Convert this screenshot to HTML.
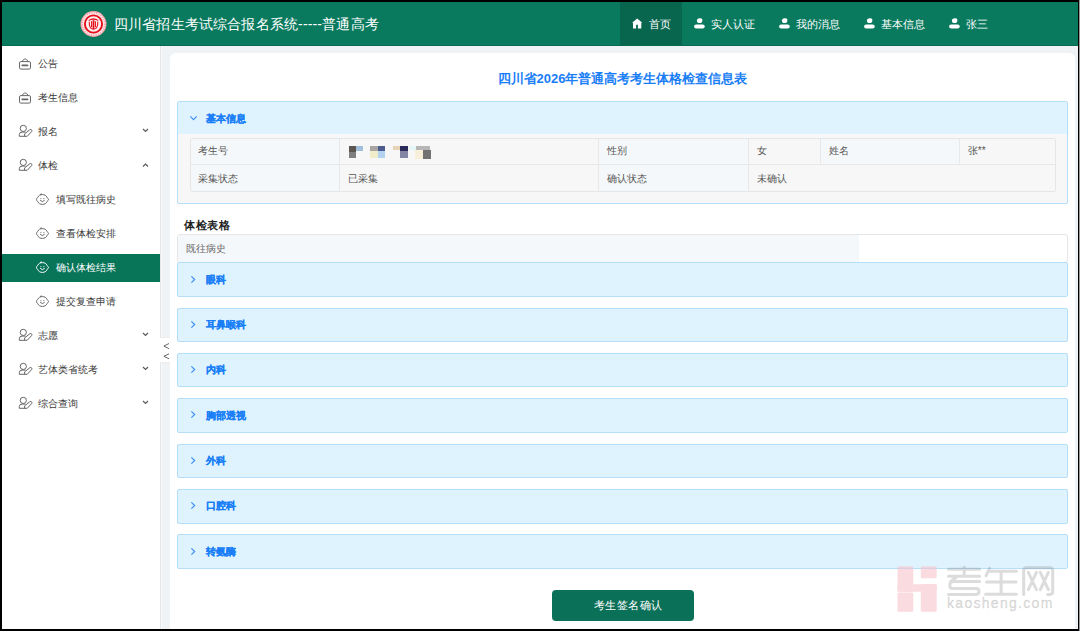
<!DOCTYPE html>
<html><head><meta charset="utf-8"><style>
*{box-sizing:border-box;margin:0;padding:0}
html,body{width:1080px;height:631px;overflow:hidden;background:#000;font-family:"Liberation Sans",sans-serif}
#frame{position:absolute;left:2px;top:2px;width:1076px;height:627px;overflow:hidden;background:#f0f3f6}
#edge{position:absolute;left:1079px;top:0;width:1px;height:631px;background:#9a9a9a}
.abs{position:absolute}
#hdr{position:absolute;left:0;top:0;width:1076px;height:44px;background:#097a5e;box-shadow:inset 0 -1px 0 #076a52}
#hdr .title{position:absolute;left:112px;top:11.9px;font-size:14px;letter-spacing:0.16px;color:#fff;white-space:nowrap;line-height:20px}
#nav .it{position:absolute;top:0.6px;height:43px;color:#fff;font-size:11.2px;line-height:43px;white-space:nowrap}
#nav .act{top:0}
#nav .act{background:#08664f}
#side{position:absolute;left:0;top:44px;width:159px;height:583px;background:#fff;border-right:1px solid #e4e4e6;box-shadow:1px 0 0 #fbfbfc}
.si{position:absolute;left:0;width:158px;height:28px;font-size:10px;color:#3a3a3a;line-height:28px;white-space:nowrap}
.si .tx{position:absolute;left:36px;top:0px}
.si.sub .tx{left:54px}
.si.on{background:#087559;color:#fff}
#card{position:absolute;left:168px;top:51px;width:905px;height:600px;background:#fff;border-radius:6px}
.ptitle{position:absolute;left:0;width:905px;top:16.5px;text-align:center;font-size:13px;font-weight:bold;color:#1a7ef6;line-height:18px}
.pan{position:absolute;left:7px;width:891px;border:1px solid #b5def8;border-radius:2px;background:#def3fd;overflow:hidden}
.pan .ph{position:absolute;left:0;top:0;width:100%}
.pan .ch{position:absolute;left:12px}
.pan .pt{position:absolute;left:28px;top:0.4px;line-height:32px;font-size:10px;font-weight:bold;color:#1a7ef7;-webkit-text-stroke:0.2px #1a7ef7}
#collapse{position:absolute;left:158px;top:335.4px;width:12.4px;height:26px;background:#fff;border:1px solid #eeeeee;border-left:none;border-radius:0 3px 3px 0}
table.info{position:absolute;left:12px;top:36px;width:867px;border-collapse:collapse;font-size:10px;color:#333}
table.info td{height:27px;border:1px solid #e3e4e6;background:#f8f9fa;padding:0 0 0 8px;white-space:nowrap}
.blur i{display:inline-block;width:12px;height:10px;margin-right:12px;vertical-align:middle}
.sect{position:absolute;left:14px;top:163.7px;font-size:11px;letter-spacing:0.55px;font-weight:bold;color:#222;line-height:16px}
.jw{position:absolute;left:7px;top:181px;width:891px;height:29px;border:1px solid #e6e6e6;border-radius:3px;background:#fff;overflow:hidden}
.jwl{position:absolute;left:0;top:0;width:681px;height:28px;background:#f5f8fa;font-size:10px;color:#666;line-height:28px;padding-left:8px}
.btn{position:absolute;left:381.5px;top:536.5px;width:142px;height:31px;background:#0a7057;border-radius:4px;color:#fff;font-size:11px;letter-spacing:0.5px;text-align:left;padding-left:42px;line-height:31px;padding-top:0.5px}
#wm{position:absolute;left:895px;top:564px;width:170px;height:50px}
#wm .wt{position:absolute;left:50px;top:-3px;font-size:32px;color:rgba(150,150,150,0.3);font-weight:bold;letter-spacing:6px;line-height:36px}
#wm .wu{position:absolute;left:50px;top:30px;font-size:14px;color:rgba(150,150,150,0.3);-webkit-text-stroke:0.45px rgba(150,150,150,0.3);letter-spacing:1.3px;line-height:14px}

.tbl{position:absolute;border:1px solid #e6e6e6;border-radius:2px;overflow:hidden;background:#f7f7f7}
.tbl .td{position:absolute;font-size:10px;color:#555;line-height:26px;padding-left:8.5px;white-space:nowrap}
.tbl .vl{position:absolute;width:1px;background:#e8e8e8}
.tbl .hl{position:absolute;height:1px;background:#e8e8e8}
.px{position:absolute;left:9.5px;top:8.4px;width:90px;height:14px}
.px b{position:absolute;display:block}
</style></head><body>
<div id="frame">
<div id="hdr"><svg style="position:absolute;left:78px;top:9px" width="27" height="27" viewBox="0 0 27 27"><circle cx="13.5" cy="13" r="12.9" fill="#fbe3e5"/>
<circle cx="13.5" cy="13" r="12.6" fill="none" stroke="#e53840" stroke-width="0.6" opacity="0.7"/>
<circle cx="13.5" cy="13" r="11.2" fill="none" stroke="#ea4a52" stroke-width="1.3" stroke-dasharray="0.8 1.6" opacity="0.55"/>
<circle cx="13.5" cy="13" r="8.6" fill="#fdf1f2" stroke="#e60f1c" stroke-width="1.9"/>
<path d="M8.6 8.9 Q13.5 5.6 18.4 8.9 L18.2 9.9 Q13.5 7.6 8.8 9.9Z" fill="#e60f1c"/>
<path d="M9.3 10.6 Q8.8 14.5 10.6 17.2 M17.7 10.6 Q18.2 14.5 16.4 17.2 M11.6 10.2 V16.2 M15.4 10.2 V16.2" fill="none" stroke="#e60f1c" stroke-width="1.1"/>
<path d="M13.5 9.2 V18.6" stroke="#e60f1c" stroke-width="1.7"/>
<path d="M10.6 17.4 Q13.5 18.8 16.4 17.4" fill="none" stroke="#e60f1c" stroke-width="0.9"/></svg><div class="title">四川省招生考试综合报名系统-----普通高考</div><div id="nav"><div class="it act" style="left:618px;width:62px"></div><svg style="position:absolute;left:630px;top:16.3px" width="11" height="11" viewBox="0 0 11 11"><path d="M5.2 0.4 L10.3 4.7 L9.3 4.7 V10.6 H5.9 V6.8 H4.1 V10.6 H1 V4.7 H0.1 Z" fill="#fff"/></svg><div class="it" style="left:647px">首页</div><svg style="position:absolute;left:692px;top:16.1px" width="11" height="11" viewBox="0 0 11 11"><path d="M2.9 2.8 Q2.9 0.2 5.7 0.2 Q8.3 0.2 8.3 1.6 V2.8 Q8.3 5.1 5.6 5.1 Q2.9 5.1 2.9 2.8Z" fill="#fff"/><rect x="0.1" y="6.4" width="10.6" height="4.2" rx="2" fill="#fff"/></svg><div class="it" style="left:709px">实人认证</div><svg style="position:absolute;left:777px;top:16.1px" width="11" height="11" viewBox="0 0 11 11"><path d="M2.9 2.8 Q2.9 0.2 5.7 0.2 Q8.3 0.2 8.3 1.6 V2.8 Q8.3 5.1 5.6 5.1 Q2.9 5.1 2.9 2.8Z" fill="#fff"/><rect x="0.1" y="6.4" width="10.6" height="4.2" rx="2" fill="#fff"/></svg><div class="it" style="left:794px">我的消息</div><svg style="position:absolute;left:862px;top:16.1px" width="11" height="11" viewBox="0 0 11 11"><path d="M2.9 2.8 Q2.9 0.2 5.7 0.2 Q8.3 0.2 8.3 1.6 V2.8 Q8.3 5.1 5.6 5.1 Q2.9 5.1 2.9 2.8Z" fill="#fff"/><rect x="0.1" y="6.4" width="10.6" height="4.2" rx="2" fill="#fff"/></svg><div class="it" style="left:879px">基本信息</div><svg style="position:absolute;left:947px;top:16.1px" width="11" height="11" viewBox="0 0 11 11"><path d="M2.9 2.8 Q2.9 0.2 5.7 0.2 Q8.3 0.2 8.3 1.6 V2.8 Q8.3 5.1 5.6 5.1 Q2.9 5.1 2.9 2.8Z" fill="#fff"/><rect x="0.1" y="6.4" width="10.6" height="4.2" rx="2" fill="#fff"/></svg><div class="it" style="left:964px">张三</div></div></div>
<div id="side">
<div class="si" style="top:3.5px"><svg style="position:absolute;left:13.5px;top:5.5px" width="20" height="18" viewBox="0 0 20 18"><rect x="3.5" y="6.6" width="11" height="7.5" rx="1.3" fill="none" stroke="#666" stroke-width="1"/><path d="M6.2 6.6 L7.4 4.7 Q7.7 4.1 8.4 4.1 H9.8 Q10.5 4.1 10.8 4.7 L12 6.6" fill="none" stroke="#666" stroke-width="1"/><path d="M6.2 10.4 H11.6" stroke="#666" stroke-width="1.6" stroke-linecap="round"/></svg><span class="tx">公告</span></div>
<div class="si" style="top:37.5px"><svg style="position:absolute;left:13.5px;top:5.5px" width="20" height="18" viewBox="0 0 20 18"><rect x="3.5" y="6.6" width="11" height="7.5" rx="1.3" fill="none" stroke="#666" stroke-width="1"/><path d="M6.2 6.6 L7.4 4.7 Q7.7 4.1 8.4 4.1 H9.8 Q10.5 4.1 10.8 4.7 L12 6.6" fill="none" stroke="#666" stroke-width="1"/><path d="M6.2 10.4 H11.6" stroke="#666" stroke-width="1.6" stroke-linecap="round"/></svg><span class="tx">考生信息</span></div>
<div class="si" style="top:71.5px"><svg style="position:absolute;left:14px;top:4.799999999999997px" width="20" height="18" viewBox="0 0 20 18"><circle cx="7.3" cy="6.4" r="3.1" fill="none" stroke="#666" stroke-width="1"/><path d="M3.3 14.3 V12.6 Q3.3 10.1 6.2 10.1 H9.4" fill="none" stroke="#666" stroke-width="1"/><path d="M3.3 14.3 H11.2" stroke="#666" stroke-width="1"/><path d="M8.6 14.3 V11.9 L13.9 7.7 Q14.8 7.1 15.6 7.9 Q16.3 8.8 15.6 9.6 L11.2 14.3" fill="none" stroke="#666" stroke-width="1"/></svg><span class="tx">报名</span><svg style="position:absolute;left:139.5px;top:10.5px" width="7" height="5" viewBox="0 0 7 5"><path d="M1 1 L3.5 3.5 L6 1" fill="none" stroke="#5a5a5a" stroke-width="1.2"/></svg></div>
<div class="si" style="top:105.5px"><svg style="position:absolute;left:14px;top:4.800000000000011px" width="20" height="18" viewBox="0 0 20 18"><circle cx="7.3" cy="6.4" r="3.1" fill="none" stroke="#666" stroke-width="1"/><path d="M3.3 14.3 V12.6 Q3.3 10.1 6.2 10.1 H9.4" fill="none" stroke="#666" stroke-width="1"/><path d="M3.3 14.3 H11.2" stroke="#666" stroke-width="1"/><path d="M8.6 14.3 V11.9 L13.9 7.7 Q14.8 7.1 15.6 7.9 Q16.3 8.8 15.6 9.6 L11.2 14.3" fill="none" stroke="#666" stroke-width="1"/></svg><span class="tx">体检</span><svg style="position:absolute;left:139.5px;top:11.6px" width="7" height="5" viewBox="0 0 7 5"><path d="M1 3.5 L3.5 1 L6 3.5" fill="none" stroke="#5a5a5a" stroke-width="1.2"/></svg></div>
<div class="si sub" style="top:139.5px"><svg style="position:absolute;left:32.8px;top:7.699999999999989px" width="15" height="13" viewBox="0 0 15 13"><path d="M1 6.5 Q2.2 5.6 2.7 4.4 C3.6 2.5 5.2 1.6 7.4 1.6 C9.6 1.6 11.2 2.5 12.1 4.4 Q12.6 5.6 13.8 6.5 Q12.6 7.4 12.1 8.6 C11.2 10.5 9.6 11.4 7.4 11.4 C5.2 11.4 3.6 10.5 2.7 8.6 Q2.2 7.4 1 6.5 Z" fill="none" stroke="#666" stroke-width="1"/><path d="M5.6 1.9 Q5.2 0.7 6.6 0.8" fill="none" stroke="#666" stroke-width="1"/><circle cx="5.9" cy="5.6" r="0.55" fill="#666"/><circle cx="8.9" cy="5.6" r="0.55" fill="#666"/><path d="M5.2 7.3 Q7.4 9.8 9.6 7.3" fill="none" stroke="#666" stroke-width="1"/></svg><span class="tx">填写既往病史</span></div>
<div class="si sub" style="top:173.5px"><svg style="position:absolute;left:32.8px;top:7.699999999999989px" width="15" height="13" viewBox="0 0 15 13"><path d="M1 6.5 Q2.2 5.6 2.7 4.4 C3.6 2.5 5.2 1.6 7.4 1.6 C9.6 1.6 11.2 2.5 12.1 4.4 Q12.6 5.6 13.8 6.5 Q12.6 7.4 12.1 8.6 C11.2 10.5 9.6 11.4 7.4 11.4 C5.2 11.4 3.6 10.5 2.7 8.6 Q2.2 7.4 1 6.5 Z" fill="none" stroke="#666" stroke-width="1"/><path d="M5.6 1.9 Q5.2 0.7 6.6 0.8" fill="none" stroke="#666" stroke-width="1"/><circle cx="5.9" cy="5.6" r="0.55" fill="#666"/><circle cx="8.9" cy="5.6" r="0.55" fill="#666"/><path d="M5.2 7.3 Q7.4 9.8 9.6 7.3" fill="none" stroke="#666" stroke-width="1"/></svg><span class="tx">查看体检安排</span></div>
<div class="si sub on" style="top:207.5px"><svg style="position:absolute;left:32.8px;top:7.699999999999989px" width="15" height="13" viewBox="0 0 15 13"><path d="M1 6.5 Q2.2 5.6 2.7 4.4 C3.6 2.5 5.2 1.6 7.4 1.6 C9.6 1.6 11.2 2.5 12.1 4.4 Q12.6 5.6 13.8 6.5 Q12.6 7.4 12.1 8.6 C11.2 10.5 9.6 11.4 7.4 11.4 C5.2 11.4 3.6 10.5 2.7 8.6 Q2.2 7.4 1 6.5 Z" fill="none" stroke="#fff" stroke-width="1"/><path d="M5.6 1.9 Q5.2 0.7 6.6 0.8" fill="none" stroke="#fff" stroke-width="1"/><circle cx="5.9" cy="5.6" r="0.55" fill="#fff"/><circle cx="8.9" cy="5.6" r="0.55" fill="#fff"/><path d="M5.2 7.3 Q7.4 9.8 9.6 7.3" fill="none" stroke="#fff" stroke-width="1"/></svg><span class="tx">确认体检结果</span></div>
<div class="si sub" style="top:241.5px"><svg style="position:absolute;left:32.8px;top:7.699999999999989px" width="15" height="13" viewBox="0 0 15 13"><path d="M1 6.5 Q2.2 5.6 2.7 4.4 C3.6 2.5 5.2 1.6 7.4 1.6 C9.6 1.6 11.2 2.5 12.1 4.4 Q12.6 5.6 13.8 6.5 Q12.6 7.4 12.1 8.6 C11.2 10.5 9.6 11.4 7.4 11.4 C5.2 11.4 3.6 10.5 2.7 8.6 Q2.2 7.4 1 6.5 Z" fill="none" stroke="#666" stroke-width="1"/><path d="M5.6 1.9 Q5.2 0.7 6.6 0.8" fill="none" stroke="#666" stroke-width="1"/><circle cx="5.9" cy="5.6" r="0.55" fill="#666"/><circle cx="8.9" cy="5.6" r="0.55" fill="#666"/><path d="M5.2 7.3 Q7.4 9.8 9.6 7.3" fill="none" stroke="#666" stroke-width="1"/></svg><span class="tx">提交复查申请</span></div>
<div class="si" style="top:275.5px"><svg style="position:absolute;left:14px;top:4.800000000000011px" width="20" height="18" viewBox="0 0 20 18"><circle cx="7.3" cy="6.4" r="3.1" fill="none" stroke="#666" stroke-width="1"/><path d="M3.3 14.3 V12.6 Q3.3 10.1 6.2 10.1 H9.4" fill="none" stroke="#666" stroke-width="1"/><path d="M3.3 14.3 H11.2" stroke="#666" stroke-width="1"/><path d="M8.6 14.3 V11.9 L13.9 7.7 Q14.8 7.1 15.6 7.9 Q16.3 8.8 15.6 9.6 L11.2 14.3" fill="none" stroke="#666" stroke-width="1"/></svg><span class="tx">志愿</span><svg style="position:absolute;left:139.5px;top:10.5px" width="7" height="5" viewBox="0 0 7 5"><path d="M1 1 L3.5 3.5 L6 1" fill="none" stroke="#5a5a5a" stroke-width="1.2"/></svg></div>
<div class="si" style="top:309.5px"><svg style="position:absolute;left:14px;top:4.800000000000011px" width="20" height="18" viewBox="0 0 20 18"><circle cx="7.3" cy="6.4" r="3.1" fill="none" stroke="#666" stroke-width="1"/><path d="M3.3 14.3 V12.6 Q3.3 10.1 6.2 10.1 H9.4" fill="none" stroke="#666" stroke-width="1"/><path d="M3.3 14.3 H11.2" stroke="#666" stroke-width="1"/><path d="M8.6 14.3 V11.9 L13.9 7.7 Q14.8 7.1 15.6 7.9 Q16.3 8.8 15.6 9.6 L11.2 14.3" fill="none" stroke="#666" stroke-width="1"/></svg><span class="tx">艺体类省统考</span><svg style="position:absolute;left:139.5px;top:10.5px" width="7" height="5" viewBox="0 0 7 5"><path d="M1 1 L3.5 3.5 L6 1" fill="none" stroke="#5a5a5a" stroke-width="1.2"/></svg></div>
<div class="si" style="top:343.5px"><svg style="position:absolute;left:14px;top:4.800000000000011px" width="20" height="18" viewBox="0 0 20 18"><circle cx="7.3" cy="6.4" r="3.1" fill="none" stroke="#666" stroke-width="1"/><path d="M3.3 14.3 V12.6 Q3.3 10.1 6.2 10.1 H9.4" fill="none" stroke="#666" stroke-width="1"/><path d="M3.3 14.3 H11.2" stroke="#666" stroke-width="1"/><path d="M8.6 14.3 V11.9 L13.9 7.7 Q14.8 7.1 15.6 7.9 Q16.3 8.8 15.6 9.6 L11.2 14.3" fill="none" stroke="#666" stroke-width="1"/></svg><span class="tx">综合查询</span><svg style="position:absolute;left:139.5px;top:10.5px" width="7" height="5" viewBox="0 0 7 5"><path d="M1 1 L3.5 3.5 L6 1" fill="none" stroke="#5a5a5a" stroke-width="1.2"/></svg></div>
</div>
<div id="collapse"><svg style="position:absolute;left:-0.3px;top:-1px" width="13" height="26" viewBox="0 0 13 26"><path d="M9 6.5 L3.9 9.1 L9 11.7 M9 16.8 L3.9 19.3 L9 21.8" fill="none" stroke="#555" stroke-width="0.9"/></svg></div>
<div id="card">
<div class="ptitle">四川省2026年普通高考考生体格检查信息表</div>
<div class="pan" style="top:48px;height:103px;background:#f7f7f7"><div class="ph" style="background:#def3fd;height:32px"></div><svg style="position:absolute;left:11px;top:12.6px" width="9" height="7" viewBox="0 0 9 7"><path d="M1.3 1.4 L4.5 4.7 L7.7 1.4" fill="none" stroke="#3a8df5" stroke-width="1.05"/></svg><span class="pt" style="top:0.9px">基本信息</span></div><div class="tbl" style="left:19.8px;top:84.7px;width:866.7px;height:54.5px"><div class="td" style="left:-1.0px;top:-1.0px;width:149.6px;height:26.6px;background:#f5f8fa">考生号</div><div class="td" style="left:148.6px;top:-1.0px;width:259.0px;height:26.6px;background:#f7f7f7"><span class="px"><b style="left:0;top:0;width:7px;height:6px;background:#5d554f"></b><b style="left:7px;top:0;width:7px;height:5px;background:#9fbfdc"></b><b style="left:0;top:6px;width:7px;height:6px;background:#7f7f7f"></b><b style="left:21px;top:0;width:8px;height:5px;background:#a9a5a2"></b><b style="left:29px;top:0;width:7px;height:5px;background:#4d5c8f"></b><b style="left:21px;top:5px;width:8px;height:7px;background:#f1edcb"></b><b style="left:29px;top:5px;width:7px;height:7px;background:#b3d2f0"></b><b style="left:44px;top:0;width:7px;height:4px;background:#e6d3b8"></b><b style="left:51px;top:0;width:8px;height:5px;background:#2b2c5c"></b><b style="left:51px;top:5px;width:8px;height:7px;background:#8485a3"></b><b style="left:60px;top:0;width:7px;height:4px;background:#e6f6f6"></b><b style="left:67px;top:0;width:14px;height:4px;background:#8a8a8a;opacity:.6"></b><b style="left:66px;top:4px;width:8px;height:9px;background:#f7efd8"></b><b style="left:74px;top:4px;width:8px;height:9px;background:#727272"></b></span></div><div class="td" style="left:407.6px;top:-1.0px;width:150.0px;height:26.6px;background:#f5f8fa">性别</div><div class="td" style="left:557.6px;top:-1.0px;width:72.1px;height:26.6px;background:#f7f7f7">女</div><div class="td" style="left:629.7px;top:-1.0px;width:138.8px;height:26.6px;background:#f5f8fa">姓名</div><div class="td" style="left:768.5px;top:-1.0px;width:96.2px;height:26.6px;background:#f7f7f7">张**</div><div class="td" style="left:-1.0px;top:27.2px;width:149.6px;height:26.9px;background:#f5f8fa">采集状态</div><div class="td" style="left:148.6px;top:27.2px;width:259.0px;height:26.9px;background:#f7f7f7">已采集</div><div class="td" style="left:407.6px;top:27.2px;width:150.0px;height:26.9px;background:#f5f8fa">确认状态</div><div class="td" style="left:557.6px;top:27.2px;width:307.1px;height:26.9px;background:#f7f7f7">未确认</div><i class="vl" style="left:148.6px;top:0;height:52.5px"></i><i class="vl" style="left:407.6px;top:0;height:52.5px"></i><i class="vl" style="left:557.6px;top:0;height:52.5px"></i><i class="vl" style="left:629.7px;top:0;height:25.6px"></i><i class="vl" style="left:768.5px;top:0;height:25.6px"></i><i class="hl" style="left:0;top:25.6px;width:865.7px"></i></div>
<div class="sect">体检表格</div>
<div class="jw"><div class="jwl">既往病史</div></div>
<div class="pan" style="top:209.1px;height:34.6px"><svg style="position:absolute;left:12px;top:12.3px" width="8" height="10" viewBox="0 0 8 10"><path d="M1.4 1.3 L4.7 4.5 L1.4 7.7" fill="none" stroke="#3a8df5" stroke-width="1.15"/></svg><span class="pt" style="top:1.4px">眼科</span></div>
<div class="pan" style="top:254.5px;height:34.6px"><svg style="position:absolute;left:12px;top:11.3px" width="8" height="10" viewBox="0 0 8 10"><path d="M1.4 1.3 L4.7 4.5 L1.4 7.7" fill="none" stroke="#3a8df5" stroke-width="1.15"/></svg><span class="pt" style="top:0.4px">耳鼻喉科</span></div>
<div class="pan" style="top:299.9px;height:34.6px"><svg style="position:absolute;left:12px;top:11.3px" width="8" height="10" viewBox="0 0 8 10"><path d="M1.4 1.3 L4.7 4.5 L1.4 7.7" fill="none" stroke="#3a8df5" stroke-width="1.15"/></svg><span class="pt" style="top:0.4px">内科</span></div>
<div class="pan" style="top:345.2px;height:34.6px"><svg style="position:absolute;left:12px;top:11.3px" width="8" height="10" viewBox="0 0 8 10"><path d="M1.4 1.3 L4.7 4.5 L1.4 7.7" fill="none" stroke="#3a8df5" stroke-width="1.15"/></svg><span class="pt" style="top:0.4px">胸部透视</span></div>
<div class="pan" style="top:390.6px;height:34.6px"><svg style="position:absolute;left:12px;top:11.3px" width="8" height="10" viewBox="0 0 8 10"><path d="M1.4 1.3 L4.7 4.5 L1.4 7.7" fill="none" stroke="#3a8df5" stroke-width="1.15"/></svg><span class="pt" style="top:0.4px">外科</span></div>
<div class="pan" style="top:436.0px;height:34.6px"><svg style="position:absolute;left:12px;top:11.3px" width="8" height="10" viewBox="0 0 8 10"><path d="M1.4 1.3 L4.7 4.5 L1.4 7.7" fill="none" stroke="#3a8df5" stroke-width="1.15"/></svg><span class="pt" style="top:0.4px">口腔科</span></div>
<div class="pan" style="top:481.4px;height:34.6px"><svg style="position:absolute;left:12px;top:11.3px" width="8" height="10" viewBox="0 0 8 10"><path d="M1.4 1.3 L4.7 4.5 L1.4 7.7" fill="none" stroke="#3a8df5" stroke-width="1.15"/></svg><span class="pt" style="top:0.4px">转氨酶</span></div>

<div class="btn">考生签名确认</div>
</div>
<div id="wm"><svg style="position:absolute;left:0px;top:0px" width="42" height="48" viewBox="0 0 42 48"><g fill="#f7c4cc" opacity="0.6"><rect x="0.5" y="0.3" width="15.8" height="25.4" rx="1.5"/><rect x="23.8" y="0.3" width="15.9" height="12" rx="1.5"/><rect x="0.5" y="18.2" width="39.2" height="7.5" rx="1"/><rect x="23.8" y="18.2" width="15.9" height="27.5" rx="1.5"/><rect x="0.5" y="26.5" width="15.8" height="19.2" rx="1.5"/></g></svg><svg style="position:absolute;left:0;top:0" width="170" height="34" viewBox="897 566 170 34"><g fill="none" stroke="rgba(120,120,120,0.26)" stroke-width="3" stroke-linecap="round" stroke-linejoin="round"><path d="M964.2 566.6 V574.3 M948.5 569.3 H979.6 M948.5 576.3 H979.6 M956.5 577.2 L950.6 581.4 M979.6 581.6 H953.5 Q949.8 581.6 949.8 585 V585.6 Q949.8 588.6 952.8 588.6 H976 Q979 588.6 979 591.4 V591.6 Q979 594.4 976 594.4 H948.5"/><path d="M989.6 568.2 L986 575.8 M988.6 571.3 H1016.4 M1001.1 571.3 V594.2 M986.6 581.9 H1016 M985.6 594.2 H1016.4"/><path d="M1023.7 594.4 V570.6 Q1023.7 567.7 1026.6 567.7 H1049.8 Q1052.7 567.7 1052.7 570.6 V591.6 Q1052.7 594.4 1049.8 594.4 H1047.6 M1028.3 572.3 L1036.4 589.6 M1036.4 572.3 L1028.3 589.6 M1040.3 572.3 L1048.4 589.6 M1048.4 572.3 L1040.3 589.6"/></g></svg><div class="wu">kaosheng.com</div></div>
</div>
<div id="edge"></div>
</body></html>
